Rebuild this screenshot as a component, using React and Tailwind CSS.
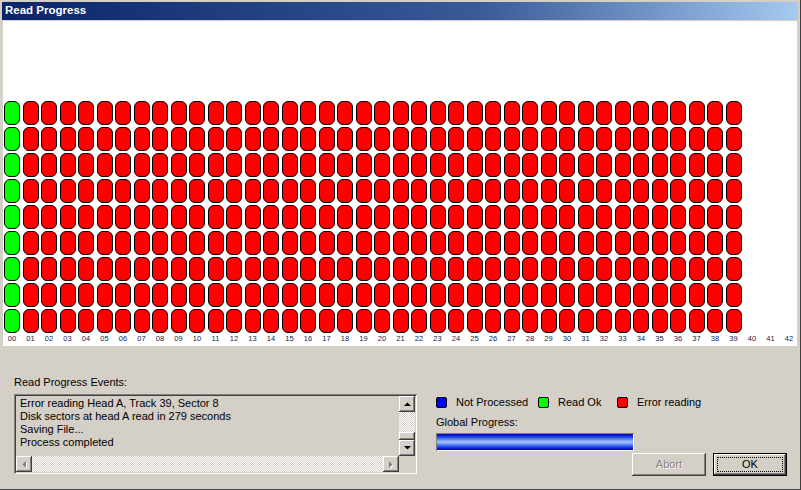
import React from "react";

const ROWS = 9;
const TRACKS = 40;
const LABELS = 43;

// raised / sunken win-classic edges
const raised =
  "shadow-[inset_-1px_-1px_#404040,inset_1px_1px_#ffffff,inset_-2px_-2px_#808080,inset_2px_2px_#d4d0c8]";
const sunken =
  "shadow-[inset_1px_1px_#808080,inset_-1px_-1px_#ffffff,inset_2px_2px_#404040,inset_-2px_-2px_#d4d0c8]";
const dither =
  "bg-[image:repeating-conic-gradient(#d4d0c8_0_25%,#ffffff_0_50%)] bg-[length:2px_2px]";

function Arrow({ dir, disabled }) {
  const pts = {
    up: "0,4 3.5,0.5 7,4",
    down: "0,0 7,0 3.5,3.5",
    left: "4,0 4,7 0.5,3.5",
    right: "0,0 0,7 3.5,3.5",
  }[dir];
  const vertical = dir === "up" || dir === "down";
  return (
    <svg width={vertical ? 7 : 4} height={vertical ? 4 : 7} className="overflow-visible">
      {disabled && <polygon points={pts} fill="#ffffff" transform="translate(1,1)" />}
      <polygon points={pts} fill={disabled ? "#808080" : "#000000"} />
    </svg>
  );
}

function ScrollButton({ dir, disabled }) {
  return (
    <div className={`w-[16px] h-[16px] shrink-0 bg-[#d4d0c8] flex items-center justify-center ${raised}`}>
      <Arrow dir={dir} disabled={disabled} />
    </div>
  );
}

function Cell({ ok }) {
  return (
    <div
      className={`w-[16px] h-[24px] rounded-[6px] border border-black ${ok ? "bg-[#00ff00]" : "bg-[#ff0000]"}`}
    />
  );
}

function Legend({ color, label, width }) {
  return (
    <div className={`flex items-center ${width}`}>
      <div className={`w-[11px] h-[11px] rounded-[2px] border border-black ${color}`} />
      <span className="ml-[9px]">{label}</span>
    </div>
  );
}

export default function App() {
  const events = [
    "Error reading Head A, Track 39, Sector 8",
    "Disk sectors at head A read in 279 seconds",
    "Saving File...",
    "Process completed",
  ];

  return (
    <div className="w-[801px] h-[490px] bg-[#d4d0c8] flex flex-col p-[2px] border-r border-b border-[#404040] font-['Liberation_Sans',Arial,sans-serif] text-[11px] text-black overflow-hidden">
      {/* caption */}
      <div className="h-[18px] shrink-0 flex items-center pl-[3px] bg-gradient-to-r from-[#0a246a] via-[#3a5a98] via-60% to-[#a6caf0]">
        <span className="text-white font-bold text-[11.5px]">Read Progress</span>
      </div>

      {/* track map */}
      <div className="h-[325px] shrink-0 mt-[1px] mx-[1px] bg-white pt-[80px] pl-[1px]">
        <div className="grid grid-cols-[repeat(43,18.5px)] gap-y-[2px]">
          {Array.from({ length: ROWS }).map((_, r) =>
            Array.from({ length: LABELS }).map((_, c) =>
              c < TRACKS ? <Cell key={`${r}-${c}`} ok={c === 0} /> : <div key={`${r}-${c}`} />
            )
          )}
        </div>
        <div className="grid grid-cols-[repeat(43,18.5px)] mt-[2px]">
          {Array.from({ length: LABELS }).map((_, c) => (
            <div key={c} className="w-[16px] text-center text-[7.5px] leading-[8px] text-[#14204a]">
              {String(c).padStart(2, "0")}
            </div>
          ))}
        </div>
      </div>

      {/* bottom panel */}
      <div className="flex-1 flex">
        <div className="pl-[12px] pt-[30px]">
          <div className="leading-[13px]">Read Progress Events:</div>
          <div className={`mt-[5px] w-[403px] h-[80px] p-[2px] flex flex-col bg-[#d4d0c8] ${sunken}`}>
            <div className="flex flex-1 min-h-0">
              <div className="flex-1 pl-[4px] pt-[1px] leading-[13px]">
                {events.map((e) => (
                  <div key={e}>{e}</div>
                ))}
              </div>
              <div className="w-[16px] flex flex-col">
                <ScrollButton dir="up" />
                <div className={`flex-1 ${dither}`} />
                <div className={`h-[8px] bg-[#d4d0c8] ${raised}`} />
                <ScrollButton dir="down" />
              </div>
            </div>
            <div className="flex h-[16px]">
              <ScrollButton dir="left" disabled />
              <div className={`flex-1 ${dither}`} />
              <ScrollButton dir="right" disabled />
              <div className="w-[16px] bg-[#d4d0c8]" />
            </div>
          </div>
        </div>

        <div className="flex-1 ml-[18px] pt-[51px] pr-[11px] flex flex-col">
          <div className="flex h-[10px] items-center pl-[1px]">
            <Legend color="bg-[#0000ff]" label="Not Processed" width="w-[102px]" />
            <Legend color="bg-[#00ff00]" label="Read Ok" width="w-[79px]" />
            <Legend color="bg-[#ff0000]" label="Error reading" width="" />
          </div>
          <div className="mt-[9px] leading-[13px] pl-[1px]">Global Progress:</div>
          <div className="mt-[4px] ml-[1px] w-[198px] h-[18px] p-[1px] shadow-[inset_1px_1px_#808080,inset_-1px_-1px_#ffffff]">
            <div className="w-full h-full bg-[linear-gradient(to_bottom,#0000a8,#1840f0_18%,#a8c8ff_50%,#1840f0_82%,#0000a8)]" />
          </div>
          <div className="mt-[2px] flex justify-end gap-[7px]">
            <div
              className={`w-[74px] h-[23px] flex items-center justify-center text-[#808080] [text-shadow:1px_1px_#ffffff] ${raised}`}
            >
              Abort
            </div>
            <div className="w-[74px] h-[23px] border border-black">
              <div className={`w-full h-full p-[3px] ${raised}`}>
                <div className="w-full h-full border border-dotted border-black flex items-center justify-center">
                  OK
                </div>
              </div>
            </div>
          </div>
        </div>
      </div>
    </div>
  );
}
